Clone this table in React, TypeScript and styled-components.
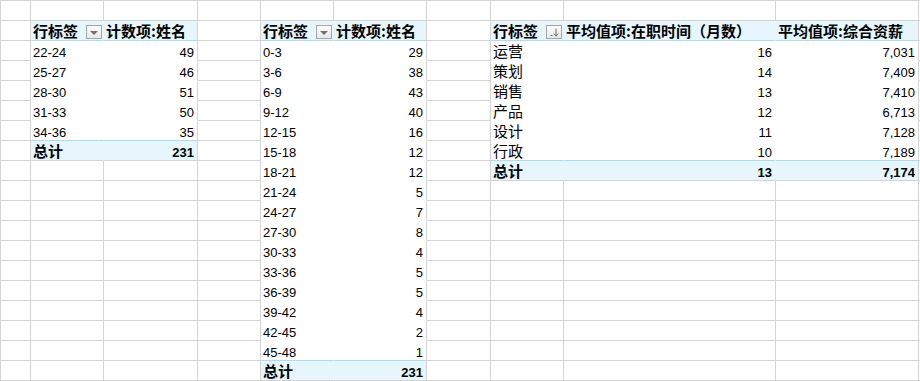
import styled, { createGlobalStyle } from "styled-components";

type Part = "blank" | "head" | "body" | "total";
type Rule = "grid" | "accent" | "none";

type CellSpec = {
  part: Part;
  text?: string;
  align?: "left" | "right";
  cjk?: boolean;
  bold?: boolean;
  edge?: boolean;
  rule?: Rule;
  filter?: "drop" | "sort";
};

type Pivot = {
  col: number;
  headers: string[];
  filter: "drop" | "sort";
  labelsCjk: boolean;
  rows: string[][];
  total: string[];
};

const GRID = "#d4d4d4";
const ACCENT = "#a8def0";
const HEAD_BG = "#e6f6fc";

const COLUMNS = [30, 73, 94, 63, 73, 93, 64, 73, 212, 143];
const ROW_COUNT = 19;

const pivots: Pivot[] = [
  {
    col: 1,
    headers: ["行标签", "计数项:姓名"],
    filter: "drop",
    labelsCjk: false,
    rows: [
      ["22-24", "49"],
      ["25-27", "46"],
      ["28-30", "51"],
      ["31-33", "50"],
      ["34-36", "35"],
    ],
    total: ["总计", "231"],
  },
  {
    col: 4,
    headers: ["行标签", "计数项:姓名"],
    filter: "drop",
    labelsCjk: false,
    rows: [
      ["0-3", "29"],
      ["3-6", "38"],
      ["6-9", "43"],
      ["9-12", "40"],
      ["12-15", "16"],
      ["15-18", "12"],
      ["18-21", "12"],
      ["21-24", "5"],
      ["24-27", "7"],
      ["27-30", "8"],
      ["30-33", "4"],
      ["33-36", "5"],
      ["36-39", "5"],
      ["39-42", "4"],
      ["42-45", "2"],
      ["45-48", "1"],
    ],
    total: ["总计", "231"],
  },
  {
    col: 7,
    headers: ["行标签", "平均值项:在职时间（月数）", "平均值项:综合资薪"],
    filter: "sort",
    labelsCjk: true,
    rows: [
      ["运营", "16", "7,031"],
      ["策划", "14", "7,409"],
      ["销售", "13", "7,410"],
      ["产品", "12", "6,713"],
      ["设计", "11", "7,128"],
      ["行政", "10", "7,189"],
    ],
    total: ["总计", "13", "7,174"],
  },
];

// builds the cell matrix: empty sheet, then each pivot drawn over it from row 2
function buildSheet(): CellSpec[][] {
  const sheet: CellSpec[][] = Array.from({ length: ROW_COUNT }, () =>
    Array.from({ length: COLUMNS.length + 1 }, () => ({ part: "blank" as Part }))
  );

  pivots.forEach((p) => {
    const width = p.headers.length;
    const last = p.col + width - 1;

    p.headers.forEach((h, i) => {
      sheet[1][p.col + i] = {
        part: "head",
        text: h,
        cjk: true,
        bold: true,
        edge: p.col + i === last,
        rule: "accent",
        filter: i === 0 ? p.filter : undefined,
      };
    });

    p.rows.forEach((r, ri) => {
      const isLast = ri === p.rows.length - 1;
      r.forEach((v, i) => {
        sheet[2 + ri][p.col + i] = {
          part: "body",
          text: v,
          align: i === 0 ? "left" : "right",
          cjk: i === 0 && p.labelsCjk,
          edge: p.col + i === last,
          rule: isLast ? "accent" : "none",
        };
      });
    });

    p.total.forEach((v, i) => {
      sheet[2 + p.rows.length][p.col + i] = {
        part: "total",
        text: v,
        align: i === 0 ? "left" : "right",
        cjk: i === 0,
        bold: true,
        edge: p.col + i === last,
        rule: "grid",
      };
    });
  });

  return sheet;
}

function SortIcon() {
  return (
    <svg width="9" height="9" viewBox="0 0 9 9">
      <rect x="0.5" y="7" width="2" height="1" fill="#6b6b6b" />
      <path d="M6 0.5 V8" stroke="#6b6b6b" strokeWidth="1" />
      <path d="M3.8 5.5 L6 8.2 L8.2 5.5" fill="none" stroke="#6b6b6b" strokeWidth="1" />
    </svg>
  );
}

export default function App() {
  const sheet = buildSheet();

  return (
    <>
      <GlobalStyle />
      <Sheet>
        {sheet.map((row, ri) =>
          row.map((c, ci) => (
            <Cell
              key={`${ri}-${ci}`}
              $part={c.part}
              $align={c.align ?? "left"}
              $cjk={!!c.cjk}
              $bold={!!c.bold}
              $edge={!!c.edge}
              $rule={c.rule ?? "grid"}
            >
              {c.text && <span>{c.text}</span>}
              {c.filter && (
                <FilterButton>{c.filter === "drop" ? <DropArrow /> : <SortIcon />}</FilterButton>
              )}
            </Cell>
          ))
        )}
      </Sheet>
    </>
  );
}

const GlobalStyle = createGlobalStyle`
  html, body {
    margin: 0;
    padding: 0;
    background: #ffffff;
  }
  body {
    width: 920px;
    height: 381px;
    overflow: hidden;
  }
`;

const Sheet = styled.div`
  display: grid;
  grid-template-columns: ${COLUMNS.map((w) => `${w}px`).join(" ")} 1fr;
  grid-auto-rows: 20px;
  width: 920px;
  box-sizing: border-box;
  border-top: 1px solid ${GRID};
  border-left: 1px solid ${GRID};
  background: #ffffff;
  color: #000000;
`;

const partBg: Record<Part, string> = {
  blank: "#ffffff",
  head: HEAD_BG,
  body: "#ffffff",
  total: HEAD_BG,
};

const ruleColor = (rule: Rule, part: Part) =>
  rule === "grid" ? GRID : rule === "accent" ? ACCENT : partBg[part];

const Cell = styled.div<{
  $part: Part;
  $align: "left" | "right";
  $cjk: boolean;
  $bold: boolean;
  $edge: boolean;
  $rule: Rule;
}>`
  box-sizing: border-box;
  height: 20px;
  min-width: 0;
  display: flex;
  align-items: flex-end;
  justify-content: ${({ $align }) => ($align === "right" ? "flex-end" : "space-between")};
  padding: 0 3px 0 2px;
  overflow: visible;
  white-space: nowrap;
  background: ${({ $part }) => partBg[$part]};
  border-right: 1px solid
    ${({ $part, $edge }) => ($part === "blank" || $edge ? GRID : partBg[$part])};
  border-bottom: 1px solid ${({ $rule, $part }) => ruleColor($rule, $part)};
  font-family: ${({ $cjk }) =>
    $cjk ? '"Noto Sans CJK SC", sans-serif' : '"Liberation Sans", "Noto Sans CJK SC", sans-serif'};
  font-size: ${({ $cjk }) => ($cjk ? "15px" : "13px")};
  line-height: ${({ $cjk }) => ($cjk ? "18px" : "15px")};
  font-weight: ${({ $bold }) => ($bold ? 700 : 400)};

  span {
    position: relative;
    z-index: 1;
  }
`;

const FilterButton = styled.span`
  box-sizing: border-box;
  flex: none;
  width: 16px;
  height: 14px;
  margin: 0 -2px 1px 0;
  display: flex;
  align-items: center;
  justify-content: center;
  border: 1px solid #a6a6a6;
  background: linear-gradient(#fdfdfd, #e8e8e8);
`;

const DropArrow = styled.span`
  width: 0;
  height: 0;
  border-left: 4px solid transparent;
  border-right: 4px solid transparent;
  border-top: 4px solid #6f6f6f;
  margin-top: 1px;
`;
